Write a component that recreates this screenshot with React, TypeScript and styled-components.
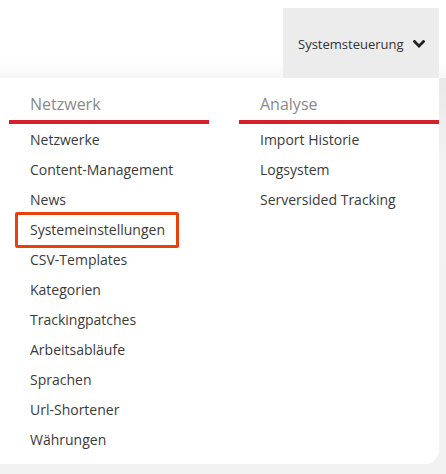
import styled, { createGlobalStyle, css } from "styled-components";

const GlobalStyle = createGlobalStyle`
  html, body {
    margin: 0;
    padding: 0;
  }
  body {
    font-family: "Open Sans", "Liberation Sans", sans-serif;
    background: #f2f2f2;
  }
  * {
    box-sizing: border-box;
  }
`;

const Page = styled.div`
  min-height: 474px;
  display: flex;
  flex-direction: column;
`;

const TopBar = styled.header`
  height: 78px;
  display: flex;
  justify-content: flex-end;
  align-items: flex-end;
  padding-right: 7px;
  background: linear-gradient(to bottom, #fff 0, #fff 62px, #f6f6f6 78px);
`;

const NavTab = styled.button`
  height: 70px;
  width: 156px;
  border: 0;
  margin: 0;
  padding: 1px 0 0 15px;
  background: #ececec;
  display: flex;
  align-items: center;
  gap: 9px;
  font-family: inherit;
  font-size: 13px;
  color: #333;
  cursor: pointer;
`;

const Chevron = () => (
  <svg width="12" height="8" viewBox="0 0 12 8" aria-hidden="true">
    <path d="M1.5 1.5 L6 6 L10.5 1.5" fill="none" stroke="#222" strokeWidth="2.8" strokeLinecap="square" />
  </svg>
);

const Body = styled.main`
  flex: 1;
  background: linear-gradient(to bottom, #e9e9e9 0, #f3f3f3 90px, #f2f2f2 100%);
  padding-bottom: 10px;
`;

const Panel = styled.nav`
  width: 439px;
  background: #fff;
  border-bottom-right-radius: 14px;
  padding: 15px 0 9px 9px;
  display: grid;
  grid-template-columns: 200px 200px;
  column-gap: 30px;
`;

const Column = styled.section`
  display: flex;
  flex-direction: column;
`;

const Heading = styled.h3`
  margin: 0;
  padding: 0 0 5px 21px;
  font-size: 16px;
  line-height: 22px;
  font-weight: 400;
  color: #8a8a8a;
  border-bottom: 4px solid #d3202a;
`;

const List = styled.ul`
  list-style: none;
  margin: 0;
  padding: 1px 0 0;
`;

const Item = styled.li<{ $marked?: boolean }>`
  line-height: 30px;
  font-size: 14px;
  color: #3a3a3a;
  padding-left: 21px;
  ${(p) =>
    p.$marked &&
    css`
      span {
        position: relative;
      }
      span::after {
        content: "";
        position: absolute;
        left: -15px;
        right: -14px;
        top: -8px;
        bottom: -9px;
        border: 3px solid #e8410b;
        border-radius: 2px;
      }
    `}
`;

const network = [
  "Netzwerke",
  "Content-Management",
  "News",
  "Systemeinstellungen",
  "CSV-Templates",
  "Kategorien",
  "Trackingpatches",
  "Arbeitsabläufe",
  "Sprachen",
  "Url-Shortener",
  "Währungen",
];

const analysis = ["Import Historie", "Logsystem", "Serversided Tracking"];

export default function App() {
  return (
    <>
      <GlobalStyle />
      <Page>
        <TopBar>
          <NavTab>
            Systemsteuerung
            <Chevron />
          </NavTab>
        </TopBar>
        <Body>
          <Panel>
            <Column>
              <Heading>Netzwerk</Heading>
              <List>
                {network.map((n) => (
                  <Item key={n} $marked={n === "Systemeinstellungen"}>
                    <span>{n}</span>
                  </Item>
                ))}
              </List>
            </Column>
            <Column>
              <Heading>Analyse</Heading>
              <List>
                {analysis.map((n) => (
                  <Item key={n}>
                    <span>{n}</span>
                  </Item>
                ))}
              </List>
            </Column>
          </Panel>
        </Body>
      </Page>
    </>
  );
}
